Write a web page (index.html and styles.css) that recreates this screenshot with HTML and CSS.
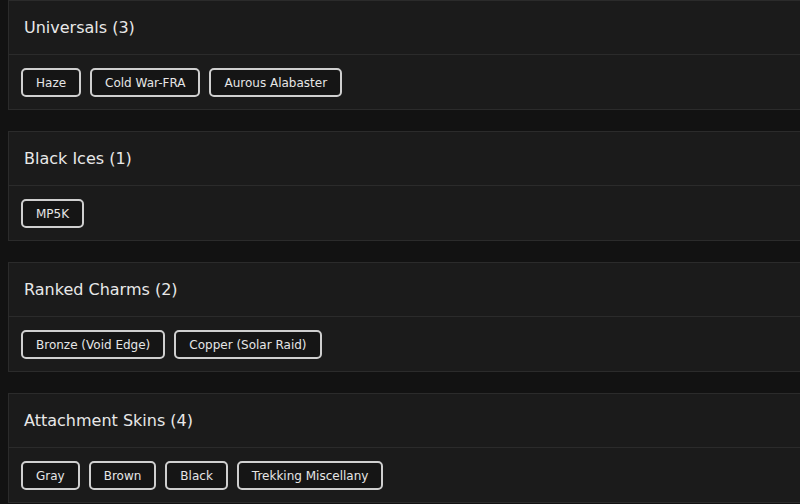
FILE: index.html
```html
<!DOCTYPE html>
<html>
<head>
<meta charset="utf-8">
<link rel="stylesheet" href="styles.css">
</head>
<body>
<div class="list">
  <section class="card">
    <div class="card-header"><h2>Universals (3)</h2></div>
    <div class="card-body">
      <span class="tag">Haze</span>
      <span class="tag">Cold War-FRA</span>
      <span class="tag">Aurous Alabaster</span>
    </div>
  </section>
  <section class="card">
    <div class="card-header"><h2>Black Ices (1)</h2></div>
    <div class="card-body">
      <span class="tag">MP5K</span>
    </div>
  </section>
  <section class="card">
    <div class="card-header"><h2>Ranked Charms (2)</h2></div>
    <div class="card-body">
      <span class="tag">Bronze (Void Edge)</span>
      <span class="tag">Copper (Solar Raid)</span>
    </div>
  </section>
  <section class="card">
    <div class="card-header"><h2>Attachment Skins (4)</h2></div>
    <div class="card-body">
      <span class="tag">Gray</span>
      <span class="tag">Brown</span>
      <span class="tag">Black</span>
      <span class="tag">Trekking Miscellany</span>
    </div>
  </section>
</div>
</body>
</html>
```
FILE: styles.css
```css
html, body {
  margin: 0;
  padding: 0;
  background: #121212;
  overflow: hidden;
}
body {
  padding: 0 0 0 8px;
  font-family: "DejaVu Sans", sans-serif;
  color: #e6e6e6;
}
.list {
  display: flex;
  flex-direction: column;
  gap: 21px;
  margin-right: -12px;
}
.card {
  background: #1b1b1b;
  border: 1px solid #2b2b2b;
}
.card-header {
  display: flex;
  align-items: center;
  padding: 0 15px;
  box-sizing: border-box;
  border-bottom: 1px solid #2b2b2b;
  height: 54px;
}
.card-header h2 {
  margin: 0;
  font-size: 16px;
  font-weight: 500;
  color: #e8e8e8;
}
.card-body {
  display: flex;
  gap: 9px;
  padding: 13px 12px 12px 12px;
}
.tag {
  display: inline-flex;
  align-items: center;
  height: 29px;
  box-sizing: border-box;
  padding: 0 13px;
  border: 2px solid #cfcfcf;
  border-radius: 5px;
  background: #151515;
  font-size: 12px;
  color: #e6e6e6;
}
```
